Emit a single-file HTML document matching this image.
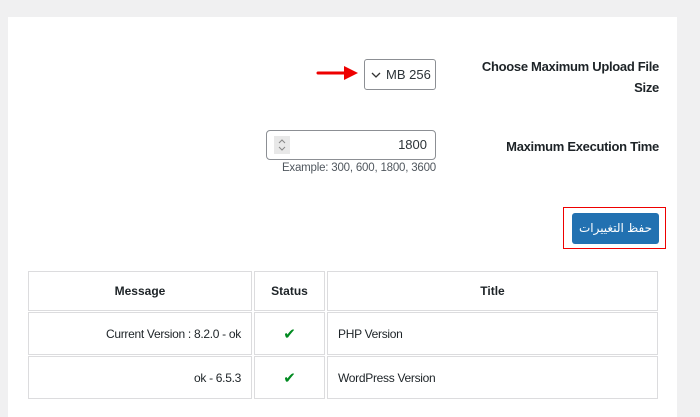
<!DOCTYPE html>
<html><head><meta charset="utf-8"><style>
*{margin:0;padding:0;box-sizing:border-box}
body{width:700px;height:400px;background:#f0f0f1;position:relative;overflow:hidden;font-family:"Liberation Sans","DejaVu Sans",sans-serif;color:#1d2327}
.panel{position:absolute;left:8px;top:17px;width:669px;height:400px;background:#fff}
.abs{position:absolute;white-space:nowrap}
.lbl{font-weight:bold;font-size:13px;letter-spacing:-0.3px;text-align:right;line-height:21px;white-space:normal}
.cell{position:absolute;border:1px solid #dcdcde;font-size:12px;display:flex;align-items:center;white-space:nowrap}
</style></head><body>
<div class="panel"></div>
<div class="abs lbl" style="right:41px;top:56px;width:190px">Choose Maximum Upload File Size</div>
<div class="abs lbl" style="right:41px;top:136px;width:200px">Maximum Execution Time</div>
<svg class="abs" style="left:316px;top:64px" width="44" height="18"><line x1="2" y1="9" x2="32" y2="9" stroke="#e00" stroke-width="3" stroke-linecap="round"/><polygon points="28,2 42,9 28,16" fill="#e00"/></svg>
<div class="abs" style="left:364px;top:59px;width:72px;height:31px;border:1px solid #8c8f94;border-radius:3px;font-size:13px;line-height:29px;padding-left:21px;color:#2c3338">MB 256</div>
<svg class="abs" style="left:371px;top:71px" width="10" height="8"><polyline points="1,2 5,6 9,2" fill="none" stroke="#333" stroke-width="1.3"/></svg>
<div class="abs" style="left:266px;top:130px;width:170px;height:30px;border:1px solid #8c8f94;border-radius:4px;font-size:13px;line-height:28px;text-align:right;padding-right:8px;color:#2c3338">1800</div>
<div class="abs" style="left:274px;top:136px;width:16px;height:18px;background:#e8e8e8"></div>
<svg class="abs" style="left:277px;top:137px" width="10" height="16"><polyline points="2,6 5,3 8,6" fill="none" stroke="#888" stroke-width="1"/><polyline points="2,10 5,13 8,10" fill="none" stroke="#888" stroke-width="1"/></svg>
<div class="abs" style="left:266px;top:162px;width:170px;font-size:11.5px;letter-spacing:-0.2px;text-align:right;color:#50575e">Example: 300, 600, 1800, 3600</div>
<div class="abs" style="left:563px;top:207px;width:103px;height:42px;border:1px solid #e00"></div>
<div class="abs" style="left:572px;top:213px;width:87px;height:31px;background:#2271b1;border-radius:3px;color:#fff;font-size:12px;line-height:31px;text-align:center">حفظ التغييرات</div>
<div class="cell" style="left:28px;top:271px;width:224px;height:40px;justify-content:center;font-weight:bold">Message</div>
<div class="cell" style="left:254px;top:271px;width:71px;height:40px;justify-content:center;font-weight:bold">Status</div>
<div class="cell" style="left:327px;top:271px;width:331px;height:40px;justify-content:center;font-weight:bold">Title</div>
<div class="cell" style="left:28px;top:312px;width:224px;height:43px;justify-content:flex-end;padding-right:10px;letter-spacing:-0.3px">Current Version : 8.2.0 - ok</div>
<div class="cell" style="left:254px;top:312px;width:71px;height:43px;justify-content:center;color:#008a20;font-size:15px;font-weight:bold">✔</div>
<div class="cell" style="left:327px;top:312px;width:331px;height:43px;padding-left:10px;letter-spacing:-0.3px">PHP Version</div>
<div class="cell" style="left:28px;top:356px;width:224px;height:43px;justify-content:flex-end;padding-right:10px;letter-spacing:-0.3px">ok - 6.5.3</div>
<div class="cell" style="left:254px;top:356px;width:71px;height:43px;justify-content:center;color:#008a20;font-size:15px;font-weight:bold">✔</div>
<div class="cell" style="left:327px;top:356px;width:331px;height:43px;padding-left:10px;letter-spacing:-0.3px">WordPress Version</div>
</body></html>
